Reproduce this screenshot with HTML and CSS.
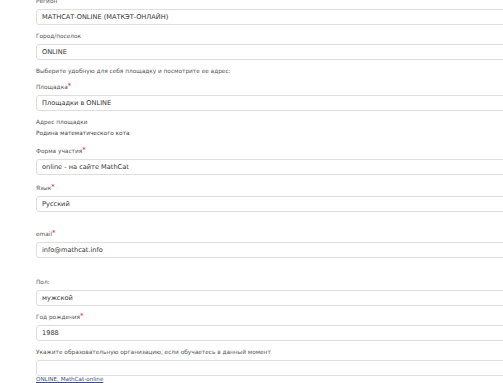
FILE: index.html
```html
<!DOCTYPE html>
<html lang="ru">
<head>
    <meta charset="UTF-8">
    <meta name="viewport" content="width=device-width, initial-scale=1.0">
    <title>Регистрация</title>
<link rel="stylesheet" href="styles.css">
</head>
<body>
    <form class="reg-form">
        <div class="field">
            <label class="field-label">Регион</label>
            <input class="field-input" type="text" value="МАТHСАТ-ONLINE (МАТКЭТ-ОНЛАЙН)" readonly>
        </div>

        <div class="field">
            <label class="field-label">Город/поселок</label>
            <input class="field-input" type="text" value="ONLINE" readonly>
        </div>

        <p class="hint">Выберите удобную для себя площадку и посмотрите ее адрес:</p>

        <div class="field">
            <label class="field-label">Площадка<span class="req">*</span></label>
            <input class="field-input" type="text" value="Площадки в ONLINE" readonly>
        </div>

        <!-- Address of the chosen place -->
        <div class="address">
            <div class="address-title">Адрес площадки</div>
            <div class="address-text">Родина математического кота</div>
        </div>

        <div class="field gap-sm">
            <label class="field-label">Форма участия<span class="req">*</span></label>
            <input class="field-input" type="text" value="online - на сайте MathCat" readonly>
        </div>

        <div class="field gap-md">
            <label class="field-label">Язык<span class="req">*</span></label>
            <input class="field-input" type="text" value="Русский" readonly>
        </div>

        <div class="field gap-lg">
            <label class="field-label">email<span class="req">*</span></label>
            <input class="field-input" type="text" value="info@mathcat.info">
        </div>

        <div class="field">
            <label class="field-label">Пол:</label>
            <input class="field-input" type="text" value="мужской" readonly>
        </div>

        <div class="field">
            <label class="field-label">Год рождения<span class="req">*</span></label>
            <input class="field-input" type="text" value="1988">
        </div>

        <div class="field gap-none">
            <label class="field-label">Укажите образовательную организацию, если обучаетесь в данный момент</label>
            <input class="field-input" type="text" value="">
        </div>

        <a class="place-link" href="#">ONLINE, MathCat-online</a>
    </form>
</body>
</html>
```

FILE: styles.css
```css
body {
    margin: 0;
    padding: 0;
    background-color: #fff;
    font-family: "DejaVu Sans", Verdana, sans-serif;
    color: #555;
    overflow: hidden;
}

.reg-form {
    margin-top: -4px;
    padding-left: 36px;
    width: 490px;
}

.field {
    margin-bottom: 6px;
}

.gap-sm {
    margin-bottom: 8px;
}

.gap-md {
    margin-bottom: 17px;
}

.gap-lg {
    margin-bottom: 19px;
}

.gap-none {
    margin-bottom: 0;
}

.field-label {
    display: block;
    font-size: 5.8px;
    line-height: 10px;
    margin-bottom: 3px;
    color: #555;
}

.req {
    color: #e0242b;
    font-size: 7px;
    vertical-align: top;
    line-height: 8px;
}

.field-input {
    display: block;
    box-sizing: border-box;
    width: 100%;
    height: 16px;
    margin: 0;
    padding: 0 5px;
    border: 1px solid #dedede;
    border-radius: 3px;
    background-color: #fff;
    font-family: "DejaVu Sans", Verdana, sans-serif;
    font-size: 6.6px;
    color: #333;
    outline: none;
}

.hint {
    margin: 0 0 6px;
    font-size: 5.8px;
    line-height: 10px;
}

.address {
    margin-bottom: 7px;
    font-size: 5.8px;
    line-height: 11px;
}

.address-text {
    color: #444;
}

.place-link {
    display: block;
    font-size: 5.6px;
    line-height: 7px;
    color: #3b4f82;
    text-decoration: underline;
}
```
